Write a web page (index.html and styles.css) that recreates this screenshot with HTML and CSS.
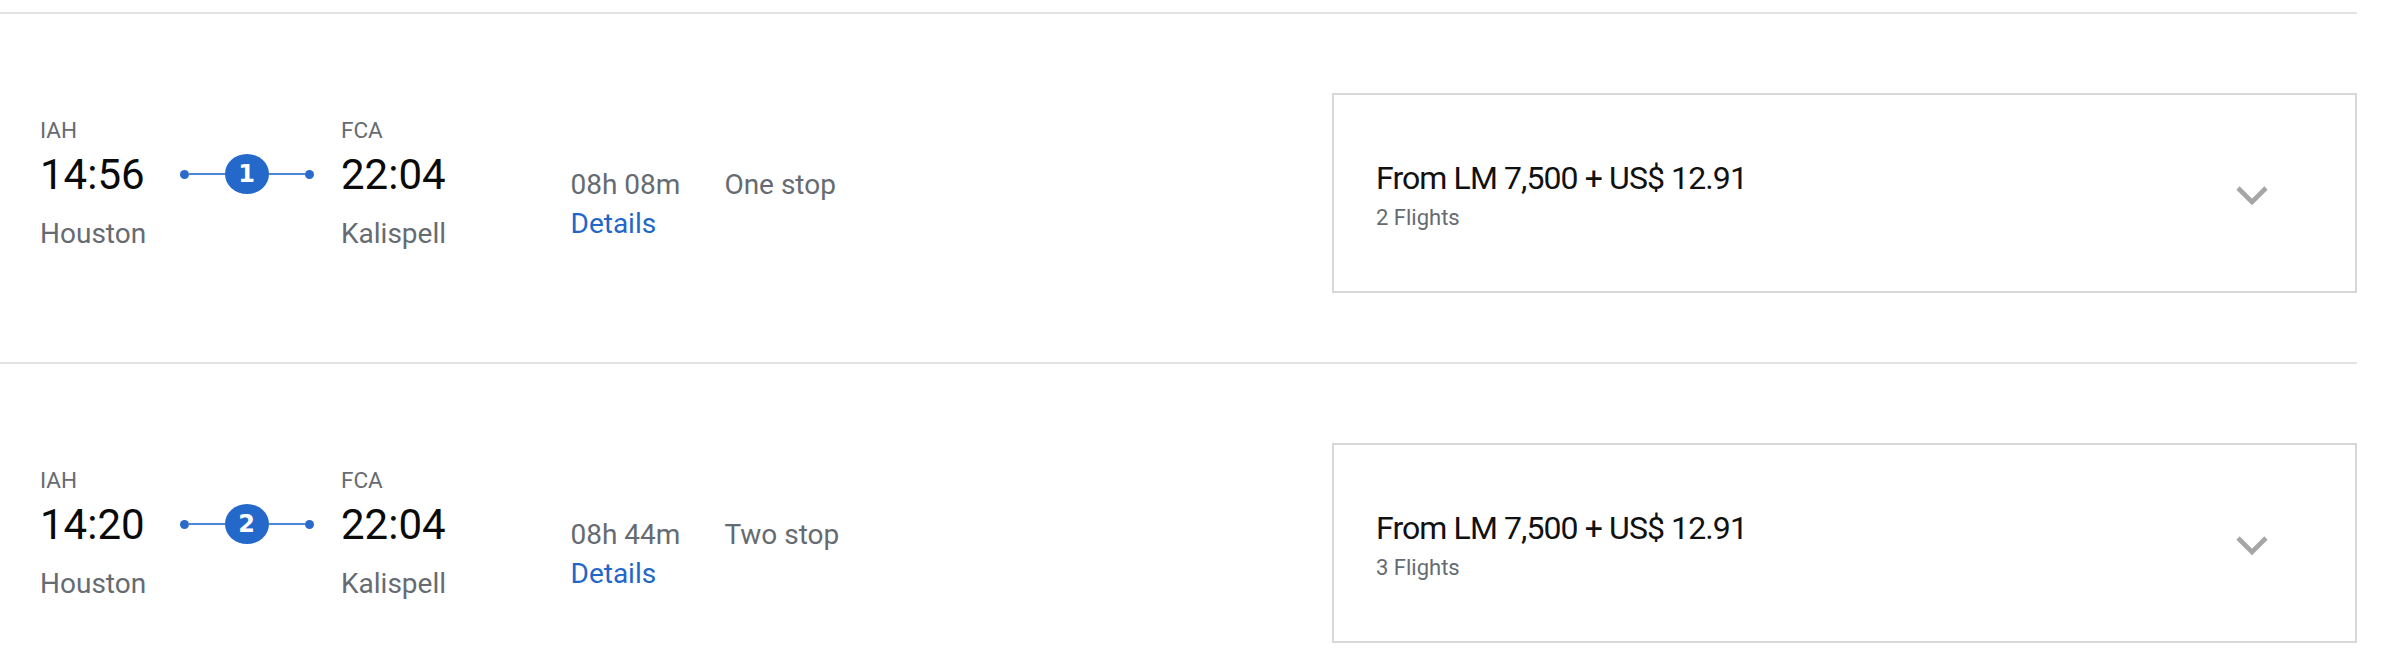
FILE: index.html
```html
<!DOCTYPE html>
<html lang="en">
<head>
<meta charset="utf-8">
<title>Flight results</title>
<link rel="stylesheet" href="styles.css">
</head>
<body>
<div class="results">
  <div class="row">
    <div class="place">
      <div class="code">IAH</div>
      <div class="time">14:56</div>
      <div class="city">Houston</div>
    </div>
    <div class="route">
      <span class="dot"></span><span class="line"></span><span class="stops">1</span><span class="line"></span><span class="dot"></span>
    </div>
    <div class="place arrive">
      <div class="code">FCA</div>
      <div class="time">22:04</div>
      <div class="city">Kalispell</div>
    </div>
    <div class="duration">
      <div class="dur-line"><span class="dur">08h 08m</span><span class="stoptext">One stop</span></div>
      <a class="details" href="#">Details</a>
    </div>
    <div class="fare">
      <div class="fare-text">
        <div class="price">From LM 7,500 + US$ 12.91</div>
        <div class="flights">2 Flights</div>
      </div>
      <svg class="chev" width="36" height="22" viewBox="0 0 36 22"><polyline points="4,4 18,18 32,4" fill="none" stroke="#a6a6a6" stroke-width="4.6"/></svg>
    </div>
  </div>
  <div class="row">
    <div class="place">
      <div class="code">IAH</div>
      <div class="time">14:20</div>
      <div class="city">Houston</div>
    </div>
    <div class="route">
      <span class="dot"></span><span class="line"></span><span class="stops">2</span><span class="line"></span><span class="dot"></span>
    </div>
    <div class="place arrive">
      <div class="code">FCA</div>
      <div class="time">22:04</div>
      <div class="city">Kalispell</div>
    </div>
    <div class="duration">
      <div class="dur-line"><span class="dur">08h 44m</span><span class="stoptext">Two stop</span></div>
      <a class="details" href="#">Details</a>
    </div>
    <div class="fare">
      <div class="fare-text">
        <div class="price">From LM 7,500 + US$ 12.91</div>
        <div class="flights">3 Flights</div>
      </div>
      <svg class="chev" width="36" height="22" viewBox="0 0 36 22"><polyline points="4,4 18,18 32,4" fill="none" stroke="#a6a6a6" stroke-width="4.6"/></svg>
    </div>
  </div>
</div>
</body>
</html>
```
FILE: styles.css
```css
html, body {
  margin: 0;
  padding: 0;
  background: #fff;
}
body {
  font-family: Roboto, "Liberation Sans", Arial, sans-serif;
  color: #000;
  overflow: hidden;
}
.results {
  width: 2357px;
  padding-top: 12px;
}
.row {
  display: flex;
  align-items: flex-start;
  border-top: 2px solid #e3e3e3;
  padding: 79px 0 69px 40px;
  height: 200px;
}
.row:last-child {
  padding-bottom: 0;
}
.place {
  width: 139.5px;
  margin-top: 23.5px;
  flex: none;
}
.place.arrive {
  width: 229.5px;
  margin-left: 27.5px;
}
.code {
  font-size: 22.5px;
  line-height: 26px;
  color: #666b72;
}
.time {
  font-size: 42px;
  line-height: 50px;
  margin-top: 7px;
  color: #0a0a0a;
}
.city {
  font-size: 28px;
  line-height: 34px;
  margin-top: 17px;
  color: #666b72;
}
.route {
  display: flex;
  align-items: center;
  width: 134px;
  height: 40px;
  margin-top: 61px;
  flex: none;
}
.dot {
  width: 9px;
  height: 9px;
  border-radius: 50%;
  background: #2a6acb;
  flex: none;
}
.line {
  width: 36px;
  height: 2px;
  background: #4d86d8;
  flex: none;
}
.stops {
  width: 44px;
  height: 40px;
  border-radius: 50%;
  background: #2469c9;
  color: #fff;
  font-family: "DejaVu Sans", Roboto, sans-serif;
  font-weight: bold;
  font-size: 24px;
  line-height: 41px;
  text-align: center;
  flex: none;
}
.duration {
  margin-top: 72px;
  flex: none;
}
.dur-line {
  display: flex;
  gap: 44px;
  font-size: 28px;
  line-height: 39px;
  color: #666b72;
}
.details {
  display: block;
  font-size: 28px;
  line-height: 39px;
  color: #2167c9;
  text-decoration: none;
}
.fare {
  margin-left: auto;
  width: 1025px;
  height: 200px;
  box-sizing: border-box;
  border: 2px solid #d8d8d8;
  display: flex;
  align-items: center;
  padding: 4px 85px 0 42px;
  flex: none;
}
.fare-text {
  flex: 1;
}
.price {
  font-size: 32px;
  line-height: 38px;
  letter-spacing: -0.9px;
  color: #111;
}
.flights {
  font-size: 22px;
  line-height: 26px;
  margin-top: 8px;
  color: #666b72;
}
.chev {
  display: block;
  flex: none;
}
```
